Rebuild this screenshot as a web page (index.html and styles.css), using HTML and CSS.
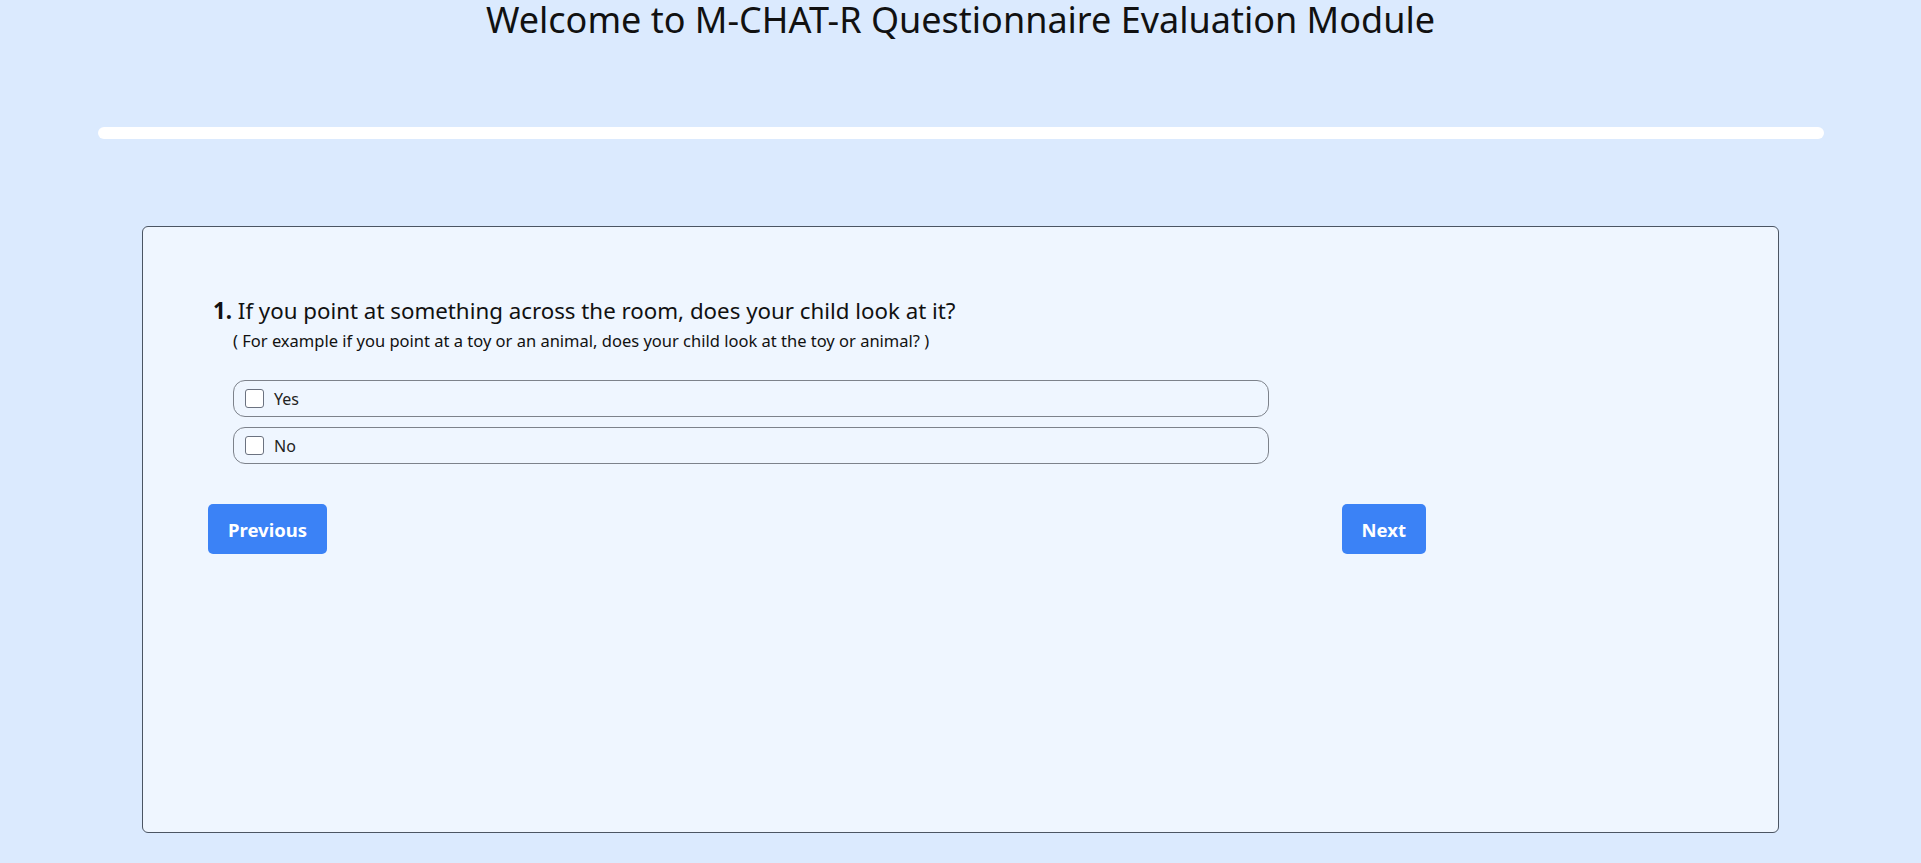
FILE: index.html
```html
<!DOCTYPE html>
<html lang="en">
<head>
<meta charset="utf-8">
<title>M-CHAT-R Questionnaire</title>
<link rel="stylesheet" href="styles.css">
</head>
<body>
<div class="page">
  <h1 class="title">Welcome to M-CHAT-R Questionnaire Evaluation Module</h1>
  <div class="progress"><div class="progress-fill" style="width:0%"></div></div>
  <div class="card">
    <div class="question">
      <p class="q-text"><span class="q-num">1.</span> If you point at something across the room, does your child look at it?</p>
      <p class="q-hint">( For example if you point at a toy or an animal, does your child look at the toy or animal? )</p>
      <div class="options">
        <label class="option"><span class="box"></span><span class="opt-label">Yes</span></label>
        <label class="option"><span class="box"></span><span class="opt-label">No</span></label>
      </div>
    </div>
    <div class="nav">
      <button class="btn">Previous</button>
      <button class="btn">Next</button>
    </div>
  </div>
</div>
</body>
</html>
```

FILE: styles.css
```css
html, body {
  margin: 0;
  padding: 0;
  background: #dbeafe;
  font-family: "Noto Sans", "Open Sans", sans-serif;
  color: #111827;
}

.page {
  min-height: 863px;
  display: flex;
  flex-direction: column;
  align-items: center;
}

.title {
  margin: 0;
  font-size: 36px;
  font-weight: 400;
  line-height: 40px;
  text-align: center;
  color: #111;
}

.progress {
  width: 1726px;
  height: 12px;
  margin-top: 87px;
  background: #ffffff;
  border-radius: 6px;
  overflow: hidden;
}

.progress-fill {
  height: 100%;
  background: #3b82f6;
}

.card {
  box-sizing: border-box;
  width: 1637px;
  height: 607px;
  margin-top: 87px;
  background: #eff6ff;
  border: 1px solid #4b5563;
  border-radius: 6px;
  padding: 70px 0 0 70px;
}

.q-text {
  margin: 0;
  font-size: 22.3px;
  line-height: 28px;
  color: #111;
}

.q-num {
  font-weight: 700;
}

.q-hint {
  margin: 5px 0 0 20px;
  font-size: 16.5px;
  line-height: 22px;
  color: #111;
}

.options {
  margin: 28px 0 0 20px;
  width: 1036px;
  display: flex;
  flex-direction: column;
  gap: 10px;
}

.option {
  box-sizing: border-box;
  height: 37px;
  display: flex;
  align-items: center;
  gap: 10px;
  padding-left: 11px;
  border: 1px solid #7d828b;
  border-radius: 12px;
  font-size: 16px;
  color: #222;
}

.box {
  box-sizing: border-box;
  width: 19px;
  height: 19px;
  border: 1px solid #6b7280;
  border-radius: 3px;
  background: #fff;
}

.nav {
  margin-top: 40px;
  margin-left: -5px;
  width: 1218px;
  display: flex;
  justify-content: space-between;
}

.btn {
  height: 50px;
  padding: 0 20px;
  border: none;
  border-radius: 5px;
  background: #3b82f6;
  color: #fff;
  font-family: "Noto Sans", "Open Sans", sans-serif;
  font-size: 18.5px;
  font-weight: 700;
}
```
